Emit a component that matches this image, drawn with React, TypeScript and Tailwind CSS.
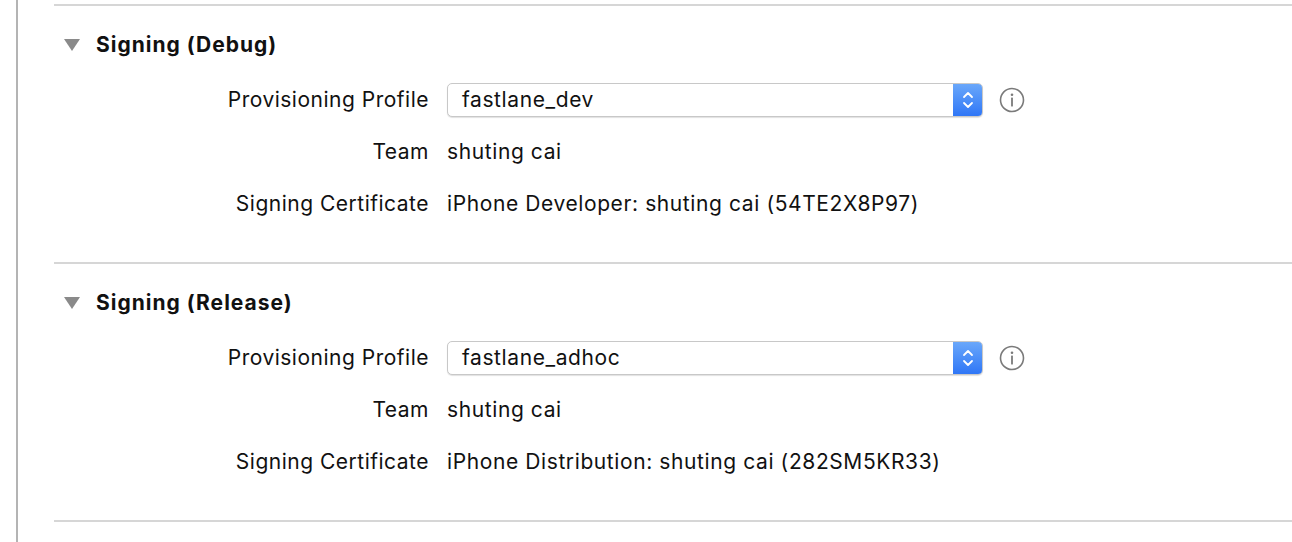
import React from 'react';

type Signing = {
  title: string;
  profile: string;
  team: string;
  certificate: string;
};

const sections: Signing[] = [
  { title: 'Signing (Debug)', profile: 'fastlane_dev', team: 'shuting cai', certificate: 'iPhone Developer: shuting cai (54TE2X8P97)' },
  { title: 'Signing (Release)', profile: 'fastlane_adhoc', team: 'shuting cai', certificate: 'iPhone Distribution: shuting cai (282SM5KR33)' },
];

const Divider = () => <div className="h-[2px] w-full bg-[#d6d6d6]" />;

const Row: React.FC<{ label: string; children: React.ReactNode }> = ({ label, children }) => (
  <div className="flex h-[36px] items-center">
    <div className="w-[375px] shrink-0 text-right text-[21px] tracking-[0.5px] text-[#111]">{label}</div>
    <div className="ml-[18px] flex items-center text-[21px] tracking-[0.6px] text-[#111]">{children}</div>
  </div>
);

const PopUp: React.FC<{ value: string }> = ({ value }) => (
  <div className="flex items-center">
    <div className="flex h-[34px] w-[536px] overflow-hidden rounded-[5px] border border-[#c8c8c8] bg-white shadow-[0_1px_1px_rgba(0,0,0,0.12)]">
      <div className="flex flex-1 items-center pl-[14px]">{value}</div>
      <div className="flex w-[29px] items-center justify-center bg-gradient-to-b from-[#6aa7fa] to-[#2f76f6]">
        <svg width="12" height="22" viewBox="0 0 12 22" fill="none" stroke="white" strokeWidth="1.8" strokeLinecap="round" strokeLinejoin="round">
          <path d="M2 8 L6 4 L10 8" />
          <path d="M2 14 L6 18 L10 14" />
        </svg>
      </div>
    </div>
    <svg className="ml-[16px]" width="26" height="26" viewBox="0 0 26 26">
      <circle cx="13" cy="13" r="11.5" fill="none" stroke="#7a7a7a" strokeWidth="1.6" />
      <circle cx="13" cy="7.8" r="1.3" fill="#7a7a7a" />
      <rect x="12.1" y="10.5" width="1.8" height="9" rx="0.6" fill="#7a7a7a" />
    </svg>
  </div>
);

const Section: React.FC<{ s: Signing }> = ({ s }) => (
  <div>
    <Divider />
    <div className="flex h-[78px] items-center pl-[10px]">
      <svg width="16" height="12" viewBox="0 0 16 12">
        <path d="M0 0 H16 L8 12 Z" fill="#8a8a8a" />
      </svg>
      <span className="ml-[16px] text-[21px] font-bold tracking-[1px] text-[#111]">{s.title}</span>
    </div>
    <div className="-mt-[2px] flex flex-col gap-[16px]">
      <Row label="Provisioning Profile">
        <PopUp value={s.profile} />
      </Row>
      <Row label="Team">{s.team}</Row>
      <Row label="Signing Certificate">{s.certificate}</Row>
    </div>
    <div className="h-[40px]" />
  </div>
);

export default function App() {
  return (
    <div className="flex h-[542px] w-[1292px] overflow-hidden bg-white" style={{ fontFamily: 'Inter, "Open Sans", Arial, sans-serif' }}>
      <div className="ml-[16px] h-full w-[2px] bg-[#b4b4b4]" />
      <div className="flex-1 pl-[36px] pt-[4px]">
        {sections.map((s) => (
          <Section key={s.title} s={s} />
        ))}
        <Divider />
      </div>
    </div>
  );
}
